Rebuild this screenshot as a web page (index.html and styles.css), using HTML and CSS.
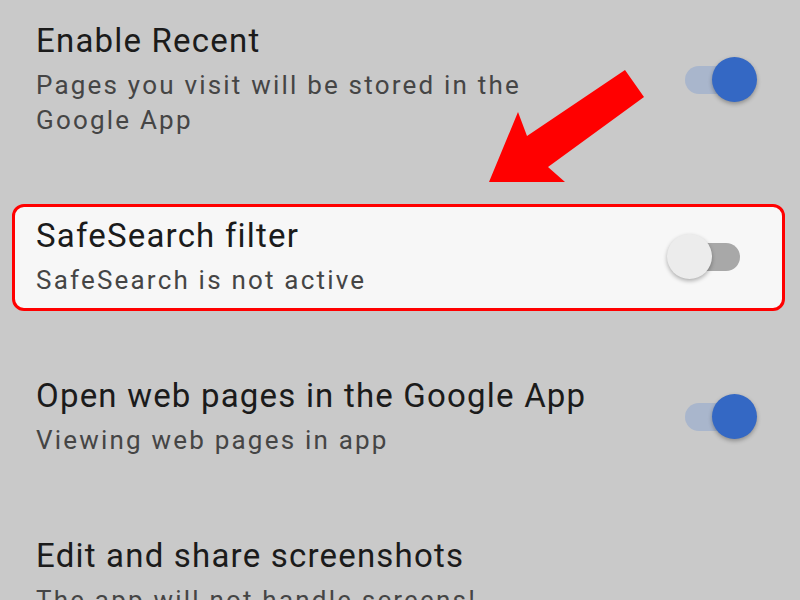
FILE: index.html
```html
<!DOCTYPE html>
<html lang="en">
<head>
  <meta charset="UTF-8">
  <meta name="viewport" content="width=device-width, initial-scale=1.0">
  <title>Settings</title>
  <link rel="stylesheet" href="styles.css">
</head>
<body>
  <div class="settings">
    <div class="setting">
      <div class="setting-text">
        <div class="setting-title">Enable Recent</div>
        <div class="setting-summary">Pages you visit will be stored in the<br>Google App</div>
      </div>
      <span class="switch is-on"><span class="switch-track"></span><span class="switch-thumb"></span></span>
    </div>

    <div class="setting highlighted">
      <div class="setting-text">
        <div class="setting-title">SafeSearch filter</div>
        <div class="setting-summary">SafeSearch is not active</div>
      </div>
      <span class="switch"><span class="switch-track"></span><span class="switch-thumb"></span></span>
    </div>

    <div class="setting">
      <div class="setting-text">
        <div class="setting-title">Open web pages in the Google App</div>
        <div class="setting-summary">Viewing web pages in app</div>
      </div>
      <span class="switch is-on"><span class="switch-track"></span><span class="switch-thumb"></span></span>
    </div>

    <div class="setting">
      <div class="setting-text">
        <div class="setting-title">Edit and share screenshots</div>
        <div class="setting-summary">The app will not handle screens!</div>
      </div>
    </div>
  </div>

  <!-- red pointer onto the SafeSearch row -->
  <svg class="callout-arrow" width="800" height="600" viewBox="0 0 800 600">
    <polygon points="489,182 518,112 527,136 625,70 644,97 548,167 565,182" fill="#ff0000"/>
  </svg>
</body>
</html>
```

FILE: styles.css
```css
:root {
  --page-bg: #c9c9c9;
  --title: #1b1b1b;
  --summary: #454545;
  --accent: #3468c4;
  --accent-track: #a9b6cc;
  --off-track: #a8a8a8;
  --off-thumb: #ececec;
  --mark: #ff0000;
}

body {
  margin: 0;
  padding: 0;
  width: 800px;
  height: 600px;
  overflow: hidden;
  position: relative;
  background: var(--page-bg);
  font-family: Roboto, "Noto Sans", sans-serif;
}

.settings {
  display: flex;
  flex-direction: column;
  gap: 53px;
  padding-top: 9px;
}

.setting {
  display: flex;
  align-items: center;
  justify-content: space-between;
  margin: 0 15px 0 12px;
  padding: 9px 24px 10px 21px;
  border: 3px solid transparent;
  border-radius: 12px;
}

.setting.highlighted {
  background: #f7f7f7;
  border: 3px solid var(--mark);
}

.setting-title {
  font-size: 33px;
  line-height: 40px;
  letter-spacing: 1.2px;
  color: var(--title);
  white-space: nowrap;
}

.setting-summary {
  margin-top: 7px;
  font-size: 26px;
  line-height: 35px;
  letter-spacing: 2.2px;
  color: var(--summary);
  white-space: nowrap;
}

/* material style switch */
.switch {
  position: relative;
  flex: none;
  width: 91px;
  height: 46px;
}

.switch-track {
  position: absolute;
  left: 18px;
  top: 9px;
  width: 55px;
  height: 28px;
  border-radius: 14px;
  background: var(--off-track);
}

.switch-thumb {
  position: absolute;
  left: 0;
  top: 0;
  width: 45px;
  height: 45px;
  border-radius: 50%;
  background: var(--off-thumb);
  box-shadow: 0 2px 4px rgba(0, 0, 0, 0.3);
}

.switch.is-on .switch-track {
  background: var(--accent-track);
}

.switch.is-on .switch-thumb {
  left: 45px;
  background: var(--accent);
}

.callout-arrow {
  position: absolute;
  left: 0;
  top: 0;
  pointer-events: none;
}
```
